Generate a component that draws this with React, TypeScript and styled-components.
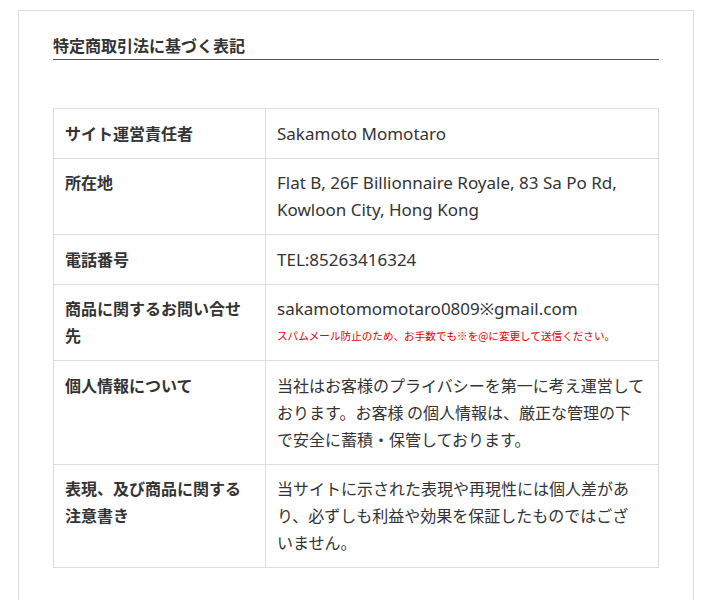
import React from "react";
import styled, { createGlobalStyle } from "styled-components";

const GlobalStyle = createGlobalStyle`
  html, body {
    margin: 0;
    padding: 0;
    background: #ffffff;
  }
  body {
    font-family: "Noto Sans CJK JP", "Noto Sans", sans-serif;
    color: #333333;
  }
`;

const Card = styled.section`
  margin: 10px 17px 0 18px;
  border: 1px solid #dddddd;
  padding: 22px 34px 60px 34px;
  background: #ffffff;
`;

const Heading = styled.h2`
  margin: 0;
  padding: 0 0 2px 0;
  font-size: 16px;
  line-height: 24px;
  font-weight: 700;
  color: #333333;
  border-bottom: 1px solid #555555;
`;

const Table = styled.table`
  margin-top: 48px;
  width: 100%;
  border-collapse: collapse;
  border: 1px solid #dddddd;
  table-layout: fixed;
`;

const Row = styled.tr`
  border-bottom: 1px solid #dddddd;
`;

const Label = styled.th`
  width: 189px;
  padding: 10.75px 11px;
  border-right: 1px solid #dddddd;
  text-align: left;
  vertical-align: top;
  font-size: 16px;
  line-height: 27px;
  font-weight: 700;
  color: #333333;
`;

const Value = styled.td<{ $latin?: boolean }>`
  padding: 10.75px 11px;
  vertical-align: top;
  text-align: left;
  font-family: ${(p) =>
    p.$latin
      ? `"Noto Sans", "Noto Sans CJK JP", sans-serif`
      : `"Noto Sans CJK JP", "Noto Sans", sans-serif`};
  font-size: ${(p) => (p.$latin ? "17px" : "16px")};
  line-height: 27px;
  font-weight: 400;
  color: #333333;
`;

const Note = styled.span`
  display: block;
  font-family: "Noto Sans CJK JP", sans-serif;
  font-size: 10.6px;
  line-height: 27px;
  color: #e50000;
`;

export default function App() {
  return (
    <>
      <GlobalStyle />
      <Card>
        <Heading>特定商取引法に基づく表記</Heading>
        <Table>
          <tbody>
            <Row>
              <Label>サイト運営責任者</Label>
              <Value $latin>Sakamoto Momotaro</Value>
            </Row>
            <Row>
              <Label>所在地</Label>
              <Value $latin>
                Flat B, 26F Billionnaire Royale, 83 Sa Po Rd, Kowloon City, Hong Kong
              </Value>
            </Row>
            <Row>
              <Label>電話番号</Label>
              <Value $latin>TEL:85263416324</Value>
            </Row>
            <Row>
              <Label>商品に関するお問い合せ先</Label>
              <Value $latin>
                sakamotomomotaro0809※gmail.com
                <Note>スパムメール防止のため、お手数でも※を@に変更して送信ください。</Note>
              </Value>
            </Row>
            <Row>
              <Label>個人情報について</Label>
              <Value>
                当社はお客様のプライバシーを第一に考え運営して
                <br />
                おります。お客様 の個人情報は、厳正な管理の下
                <br />
                で安全に蓄積・保管しております。
              </Value>
            </Row>
            <Row>
              <Label>表現、及び商品に関する注意書き</Label>
              <Value>
                当サイトに示された表現や再現性には個人差があ
                <br />
                り、必ずしも利益や効果を保証したものではござ
                <br />
                いません。
              </Value>
            </Row>
          </tbody>
        </Table>
      </Card>
    </>
  );
}
